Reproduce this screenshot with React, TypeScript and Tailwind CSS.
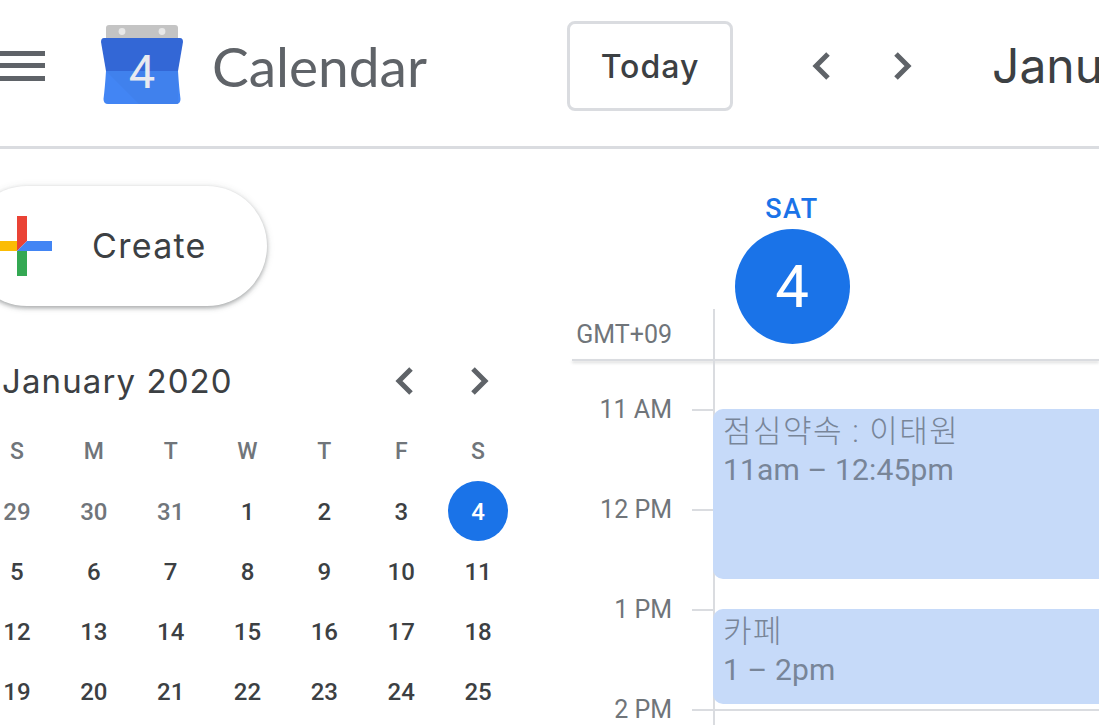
const ROBOTO = "font-['Roboto',sans-serif]";

const weeks = [
  ["29", "30", "31", "1", "2", "3", "4"],
  ["5", "6", "7", "8", "9", "10", "11"],
  ["12", "13", "14", "15", "16", "17", "18"],
  ["19", "20", "21", "22", "23", "24", "25"],
];

function Chevron({ dir, className }: { dir: "left" | "right"; className?: string }) {
  return (
    <svg viewBox="0 0 24 36" className={className} fill="none" stroke="#5f6368" strokeWidth="5">
      {dir === "left" ? <path d="M19 6 L7 18 L19 30" /> : <path d="M5 6 L17 18 L5 30" />}
    </svg>
  );
}

function Logo() {
  return (
    <svg viewBox="0 0 82 80" className="w-[82px] h-[80px] shrink-0">
      <path d="M5 3 Q5 0 8 0 L74 0 Q77 0 77 3 L77 16 L5 16 Z" fill="#c4c4c4" />
      <circle cx="21" cy="6.500" r="3.400" fill="#e8e8e8" />
      <circle cx="61" cy="6.500" r="3.400" fill="#e8e8e8" />
      <path d="M3 13 L79 13 Q82 13 82 17 L77 46 L5 46 L0 17 Q0 13 3 13 Z" fill="#3367d6" />
      <path d="M5 46 L77 46 Q78 62 79.500 74 Q79.500 79 75 79 L7 79 Q2.500 79 2.500 74 Q4 62 5 46 Z" fill="#4285f4" />
      <path d="M5 46 L77 46 L77 79 L38 79 Z" fill="#3f7fe8" opacity="0.6" />
      <text x="41" y="63" textAnchor="middle" fontFamily="Roboto, sans-serif" fontSize="47" fill="#e8eaf0">4</text>
    </svg>
  );
}

function PlusIcon() {
  return (
    <svg viewBox="0 0 60 60" className="w-[60px] h-[60px] shrink-0">
      <polygon points="25,0 35,0 35,25 25,35" fill="#ea4335" />
      <polygon points="0,25 25,25 25,35 0,35" fill="#fbbc04" />
      <polygon points="35,25 60,25 60,35 25,35" fill="#4285f4" />
      <polygon points="25,35 35,35 35,60 25,60" fill="#34a853" />
    </svg>
  );
}

function Hour({ label, line }: { label: string; line?: boolean }) {
  return (
    <div className="h-[100px] flex">
      <div className={`w-[100px] text-right text-[25px] leading-[30px] -mt-[14px] h-[30px] text-[#70757a] ${ROBOTO}`}>{label}</div>
      <div className="ml-[20px] w-[21px] h-[2px] bg-[#dadce0]" />
      {line && <div className="flex-1 h-[2px] bg-[#dadce0]" />}
    </div>
  );
}

function EventCard({ className, title, time }: { className: string; title: string; time: string }) {
  return (
    <div className={`absolute left-0 right-0 bg-[#c6daf9] rounded-l-[10px] pl-[10px] text-[#788598] text-[30px] leading-[39px] ${ROBOTO} ${className}`}>
      <div className="font-['Roboto','Noto_Sans_CJK_KR',sans-serif] text-[31px] tracking-[1.500px] font-light pt-[1px] -mb-[1px]">{title}</div>
      <div className="tracking-[0.150px]">{time}</div>
    </div>
  );
}

export default function App() {
  return (
    <div className="w-[1099px] h-[725px] overflow-hidden bg-white flex flex-col">
      <header className="h-[149px] shrink-0 border-b-[3px] border-[#dadce0] flex items-center whitespace-nowrap">
        <div className="w-[45px] h-[30px] flex flex-col justify-between shrink-0 -mt-[15px]">
          <div className="h-[5px] bg-[#5f6368]" />
          <div className="h-[5px] bg-[#5f6368]" />
          <div className="h-[5px] bg-[#5f6368]" />
        </div>
        <div className="ml-[56px] -mt-[17px]"><Logo /></div>
        <div className="ml-[29px] w-[355px] shrink-0 text-[55px] leading-none text-[#5f6368] font-['Lato',sans-serif] -mt-[14px]">Calendar</div>
        <button className="w-[166px] h-[90px] shrink-0 border-[3px] border-[#dadce0] rounded-[8px] text-[32px] tracking-[1px] pt-[2px] text-[#3c4043] font-medium font-['Inter',sans-serif] -mt-[14px]">Today</button>
        <Chevron dir="left" className="ml-[76px] w-[24px] h-[36px] shrink-0 -mt-[14px]" />
        <Chevron dir="right" className="ml-[58px] w-[24px] h-[36px] shrink-0 -mt-[14px]" />
        <div className="ml-[77px] text-[48px] leading-none text-[#3c4043] font-['Inter',sans-serif] -mt-[14px]">January 2020</div>
      </header>
      <div className="flex-1 flex min-h-0">
        <aside className="w-[572px] shrink-0">
          <div className="mt-[37px] -ml-[33px] w-[300px] h-[120px] rounded-full bg-white shadow-[0_2px_4px_rgba(60,64,67,0.4),0_1px_8px_rgba(60,64,67,0.12)] flex items-center">
            <div className="ml-[25px]"><PlusIcon /></div>
            <div className="ml-[40px] text-[34px] tracking-[1.300px] leading-none text-[#3c4043] font-['Inter',sans-serif]">Create</div>
          </div>
          <div className="mt-[50px] h-[50px] flex items-center">
            <div className="ml-[2px] w-[390px] text-[33px] tracking-[1.100px] leading-none text-[#3c4043] font-['Inter',sans-serif]">January 2020</div>
            <Chevron dir="left" className="w-[24px] h-[36px] shrink-0" />
            <Chevron dir="right" className="ml-[52px] w-[24px] h-[36px] shrink-0" />
          </div>
          <div className={`-ml-[21.500px] mt-[15px] w-[538px] grid grid-cols-7 ${ROBOTO}`}>
            {["S", "M", "T", "W", "T", "F", "S"].map((d, i) => (
              <div key={i} className="h-[60px] flex items-center justify-center pt-[2px] text-[23px] leading-[30px] font-medium text-[#70757a]">{d}</div>
            ))}
            {weeks.flat().map((d, i) => (
              <div key={i} className="h-[60px] flex items-center justify-center">
                {d === "4" && i === 6 ? (
                  <div className="w-[60px] h-[60px] rounded-full bg-[#1a73e8] text-white flex items-center justify-center pt-[2px] text-[24px] font-medium">4</div>
                ) : (
                  <span className={`text-[24px] mt-[2px] font-medium ${i < 3 ? "text-[#70757a]" : "text-[#3c4043]"}`}>{d}</span>
                )}
              </div>
            ))}
          </div>
        </aside>
        <main className="flex-1 min-w-0 flex flex-col">
          <div className="h-[212px] shrink-0 flex">
            <div className="w-[143px] shrink-0 flex justify-between items-end">
              <div className={`w-[100px] text-right text-[25px] leading-[30px] mb-[11px] text-[#70757a] ${ROBOTO}`}>GMT+09</div>
              <div className="w-[2px] h-[52px] bg-[#dadce0]" />
            </div>
            <div className="w-[154px] flex flex-col items-center pt-[44px]">
              <div className={`text-[27px] leading-[32px] font-medium tracking-[1.500px] text-[#1a73e8] ${ROBOTO}`}>SAT</div>
              <div className={`mt-[4px] w-[115px] h-[115px] rounded-full bg-[#1a73e8] text-white flex items-center justify-center text-[60px] ${ROBOTO}`}>4</div>
            </div>
          </div>
          <div className="h-[2px] shrink-0 bg-[#dadce0] shadow-[0_2px_3px_rgba(60,64,67,0.2)] -mt-[2px]" />
          <div className="relative flex-1 pt-[48px] overflow-hidden">
            <Hour label="11 AM" />
            <Hour label="12 PM" />
            <Hour label="1 PM" />
            <Hour label="2 PM" line />
            <div className="absolute top-0 bottom-0 left-[141px] right-0 border-l-2 border-[#dadce0]">
              <EventCard className="top-[48px] h-[170px] pt-[2px] -ml-[2px]" title="점심약속 : 이태원" time="11am – 12:45pm" />
              <EventCard className="top-[248px] h-[95px] pt-[2px] -ml-[2px]" title="카페" time="1 – 2pm" />
            </div>
          </div>
        </main>
      </div>
    </div>
  );
}
